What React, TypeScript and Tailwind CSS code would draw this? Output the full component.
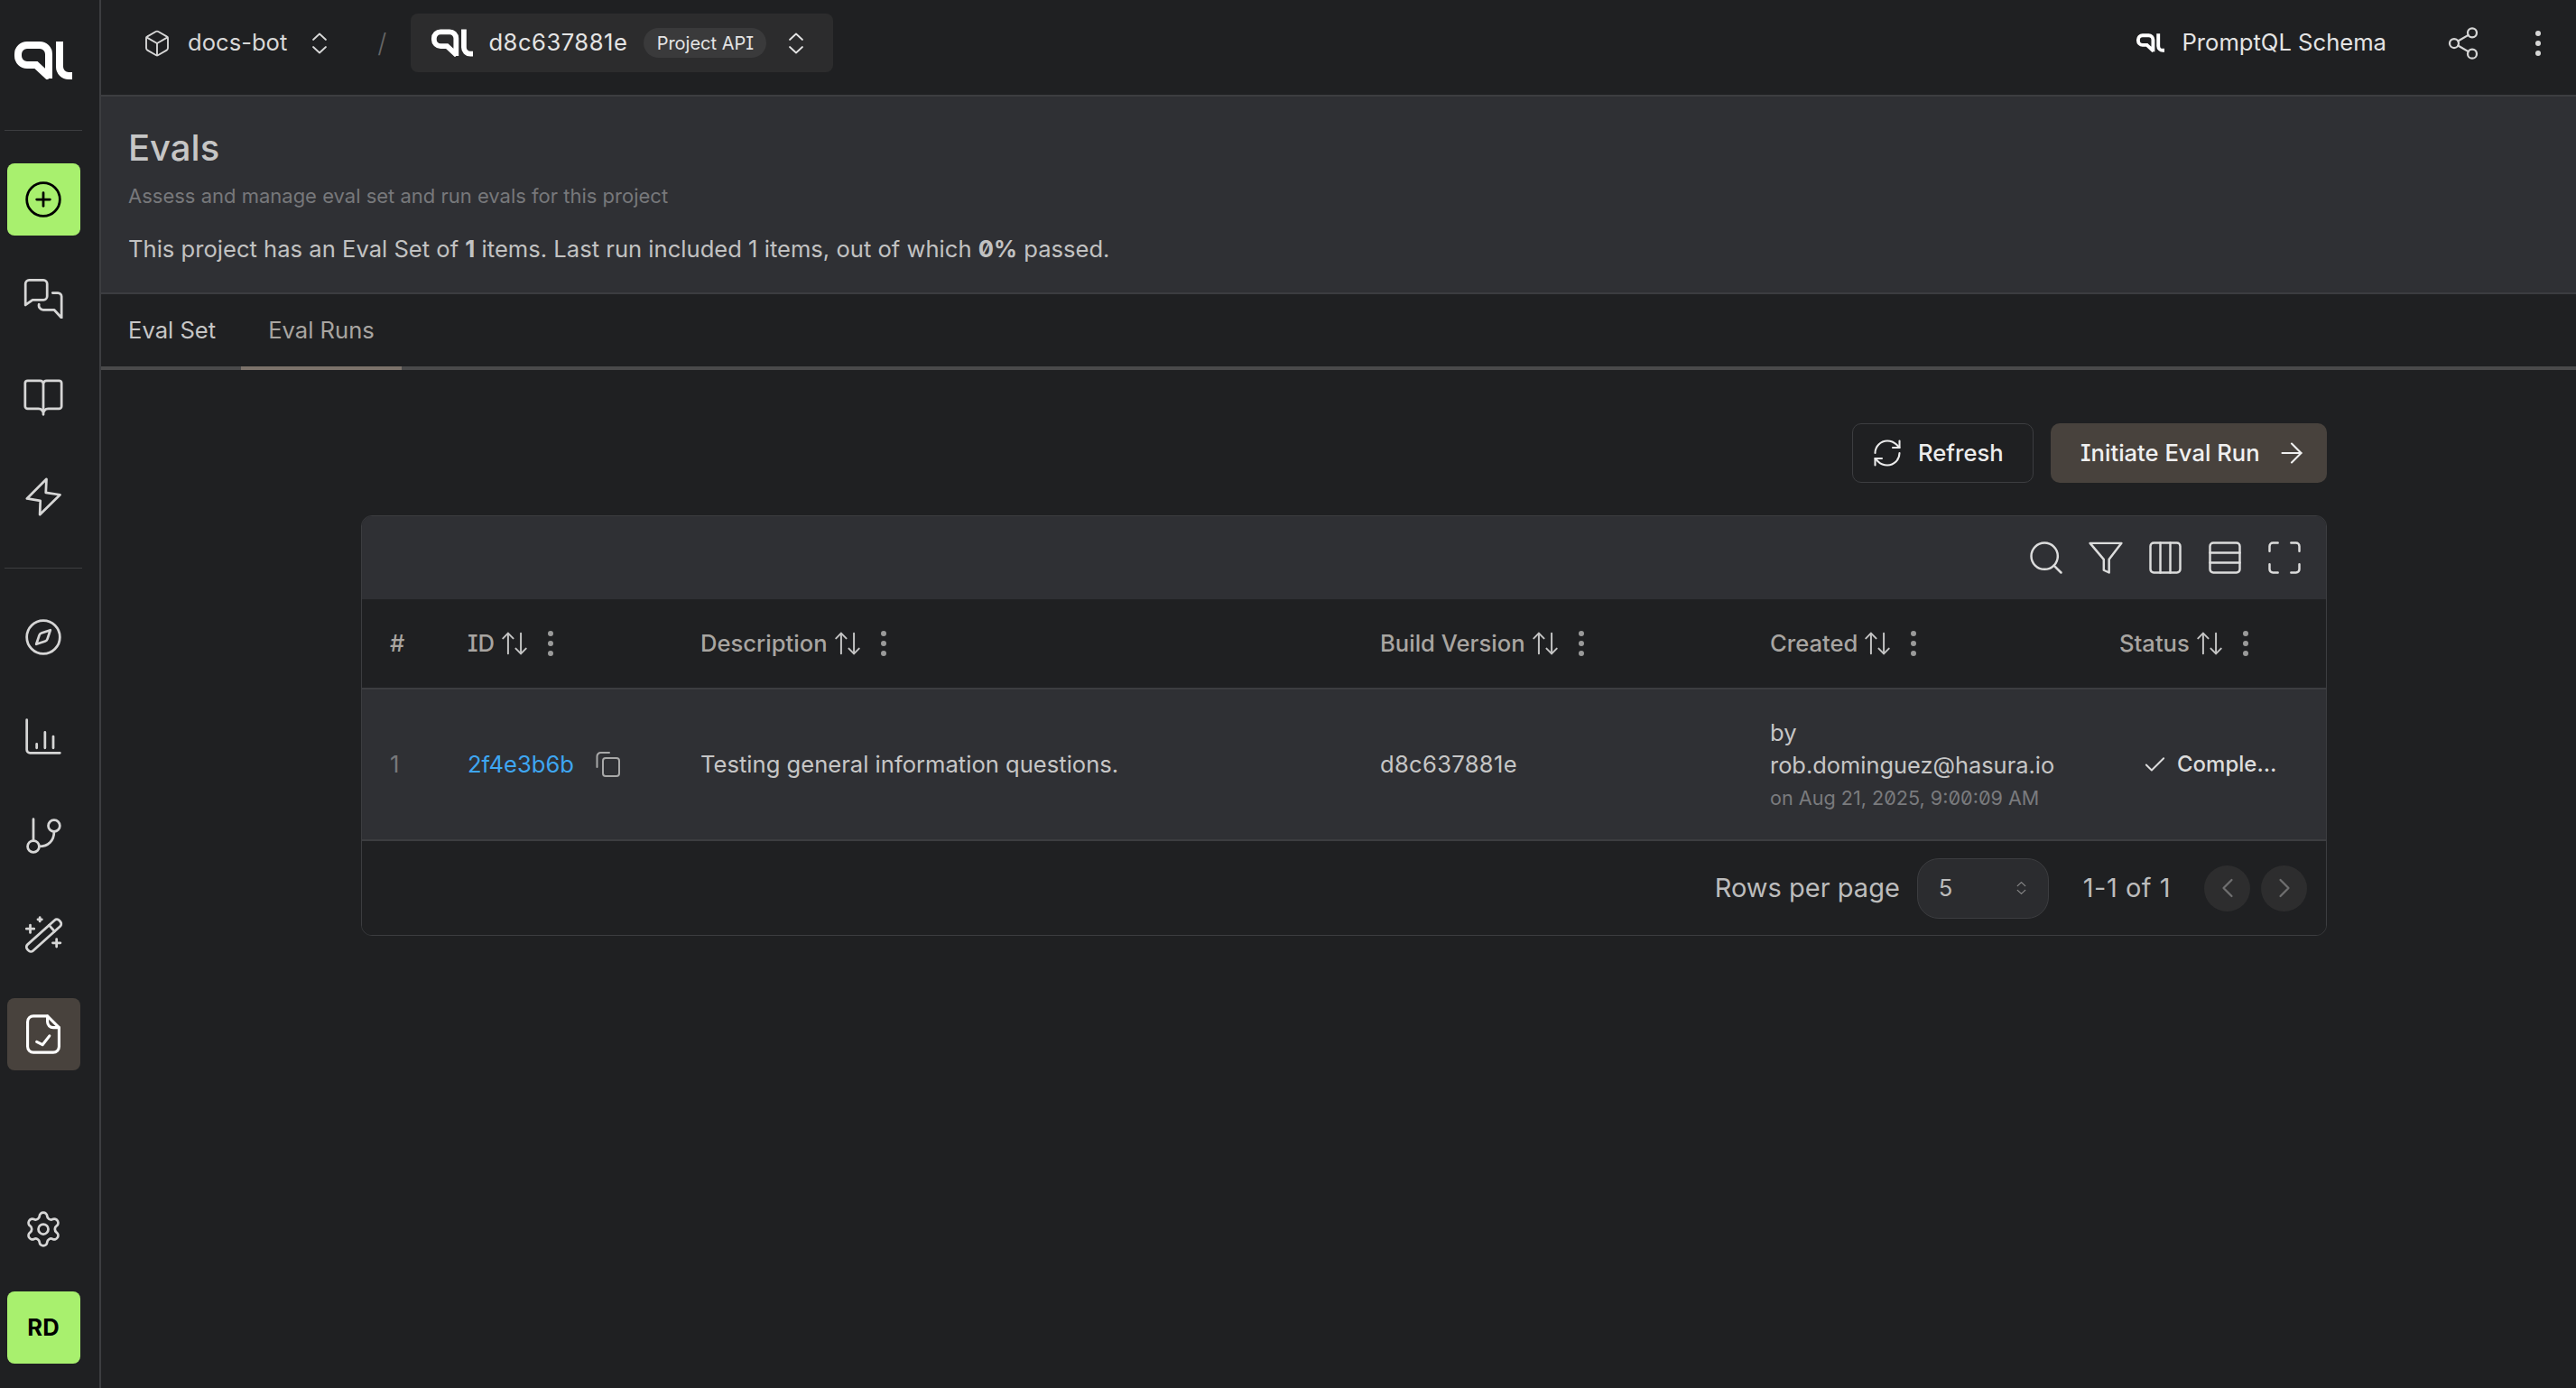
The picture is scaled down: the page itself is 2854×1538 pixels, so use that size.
import { ArrowRight, ArrowUpDown, Box, Check, ChevronLeft, ChevronRight, CirclePlus, Columns3, Compass, Maximize, RefreshCw, Rows3, Search, Settings, Share2 } from 'lucide-react'
import type { ReactNode } from 'react'

function Logo({ className }: { className: string }) {
  return (
    <svg viewBox="0 0 64 42" className={className} fill="none" stroke="currentColor" strokeWidth="8">
      <path d="M38 41V14A10 10 0 0 0 28 4H14A10 10 0 0 0 4 14v2a10 10 0 0 0 10 10h10l15 14" />
      <path d="M50 0v28a10 10 0 0 0 10 10h4" />
    </svg>
  )
}

function NavIcon({ children, strokeWidth = 1.5 }: { children: ReactNode; strokeWidth?: number }) {
  return (
    <svg viewBox="0 0 24 24" className="w-11 h-11" fill="none" stroke="currentColor" strokeWidth={strokeWidth} strokeLinecap="round" strokeLinejoin="round">
      {children}
    </svg>
  )
}

function UpDown({ className }: { className: string }) {
  return (
    <svg viewBox="0 0 18 24" className={className} fill="none" stroke="currentColor" strokeWidth="1.8" strokeLinecap="round" strokeLinejoin="round">
      <path d="M2 8l7-6.5L16 8M2 16l7 6.5 7-6.5" />
    </svg>
  )
}

function Kebab({ className }: { className: string }) {
  return (
    <svg viewBox="0 0 8 32" className={className} fill="currentColor">
      <circle cx="4" cy="5" r="3" />
      <circle cx="4" cy="16" r="3" />
      <circle cx="4" cy="27" r="3" />
    </svg>
  )
}

function SideButton({ children, tone }: { children: ReactNode; tone?: 'green' | 'active' }) {
  const toneClass = tone === 'green' ? 'bg-[#a8f06e] text-black' : tone === 'active' ? 'bg-[#48423d] text-white' : 'text-[#d6d6d6]'
  return <div className={`w-[81px] h-[80px] rounded-lg flex items-center justify-center ${toneClass}`}>{children}</div>
}

function Sidebar() {
  return (
    <aside className="w-[112px] shrink-0 h-full bg-[#1f2022] border-r-2 border-[#3c3d40] flex flex-col items-center pr-[14px] pb-[27px]">
      <div className="h-[144px] w-full flex items-start justify-center pt-[46px] text-white">
        <Logo className="w-16 h-[42px]" />
      </div>
      <div className="w-[86px] h-px bg-[#3c3d40] mb-[36px]" />
      <div className="flex flex-col gap-[30px]">
        <SideButton tone="green">
          <CirclePlus size={44} strokeWidth={1.5} />
        </SideButton>
        <SideButton>
          <NavIcon>
            <path d="M1.2 13.5V3a2.2 2.2 0 0 1 2.2-2.2h8.7A2.2 2.2 0 0 1 14.3 3v7.5a2.2 2.2 0 0 1-2.2 2.2H5.5L1.2 15.8z" />
            <path d="M17.6 8.5h3.2a2.2 2.2 0 0 1 2.2 2.2v12.9l-4.5-4.9H12a2.6 2.6 0 0 1-2.6-3.3" />
          </NavIcon>
        </SideButton>
        <SideButton>
          <NavIcon>
            <path d="M12 3.5v18M12 3.5a2 2 0 0 1 2-2h7.5a1.5 1.5 0 0 1 1.5 1.5v14a1.5 1.5 0 0 1-1.5 1.5H15a3 3 0 0 0-3 3.5 3 3 0 0 0-3-3.5H2.5A1.5 1.5 0 0 1 1 17V3a1.5 1.5 0 0 1 1.5-1.5H10a2 2 0 0 1 2 2z" />
          </NavIcon>
        </SideButton>
        <SideButton>
          <NavIcon>
            <path d="M13.9 1 2.1 12.8l8.1 1.3-.3 8.4 12.2-12-8.6-1.3z" />
          </NavIcon>
        </SideButton>
      </div>
      <div className="w-[86px] h-px bg-[#3c3d40] mt-[38px] mb-[36px]" />
      <div className="flex flex-col gap-[30px]">
        <SideButton>
          <Compass size={44} strokeWidth={1.5} />
        </SideButton>
        <SideButton>
          <NavIcon>
            <path d="M2 2v18a2 2 0 0 0 2 2h18M8 16.5V19M13 9.5V19M18 12v7" />
          </NavIcon>
        </SideButton>
        <SideButton>
          <NavIcon>
            <path d="M6 2v13M18.5 9.5c0 5.5-3.5 9-9 9" />
            <circle cx="6" cy="18.5" r="3.5" />
            <circle cx="18.5" cy="6" r="3.5" />
          </NavIcon>
        </SideButton>
        <SideButton>
          <NavIcon>
            <rect x="-13" y="-2.5" width="26" height="5" rx="2" transform="translate(12.3 12.3) rotate(-42)" />
            <path d="M6.5-2.5v5" transform="translate(12.3 12.3) rotate(-42)" />
            <path d="M4.1 6v4.6M1.8 8.3h4.6M9.9 1.4v2.4M8.7 2.6h2.4M20 14.5v4.6M17.7 16.8h4.6" />
          </NavIcon>
        </SideButton>
        <SideButton tone="active">
          <NavIcon strokeWidth={1.7}>
            <path d="M14.5 1H6a3.5 3.5 0 0 0-3.5 3.5v15A3.5 3.5 0 0 0 6 23h12a3.5 3.5 0 0 0 3.5-3.5V8z" />
            <path d="M14.5 1v3.5A3.5 3.5 0 0 0 18 8h3.5M8 16.6l3.5 1.8 4.2-5.4" />
          </NavIcon>
        </SideButton>
      </div>
      <div className="mt-auto flex flex-col gap-[29px] items-center">
        <SideButton>
          <Settings size={44} strokeWidth={1.5} />
        </SideButton>
        <SideButton tone="green">
          <span className="text-[25.6px] font-bold">RD</span>
        </SideButton>
      </div>
    </aside>
  )
}

function TopBar() {
  return (
    <header className="h-[107px] shrink-0 bg-[#1f2022] border-b-2 border-[#3c3d40] flex items-start pl-[47px] pr-[38px] pt-[15px]">
      <div className="flex items-center h-[65px] text-[#d8d8d8]">
        <Box size={32} strokeWidth={1.4} className="-mx-px" />
        <span className="ml-[19px] text-[25.6px]">docs-bot</span>
        <UpDown className="ml-[27px] w-[18px] h-6" />
        <span className="ml-[55px] mr-[27px] text-[29px] text-[#666] font-light">/</span>
      </div>
      <div className="flex items-center h-[65px] w-[468px] rounded-lg bg-[#2c2c2d] pl-[23px] text-[#e4e4e4]">
        <Logo className="w-[46px] h-[31px] text-white" />
        <span className="ml-[17px] text-[25.6px] tracking-[0.5px]">d8c637881e</span>
        <span className="ml-[18px] h-[33px] w-[136px] rounded-full bg-[#3a3a3b] flex items-center justify-center text-[20px]">Project API</span>
        <UpDown className="ml-[24px] w-[18px] h-6" />
      </div>
      <div className="ml-auto flex items-center h-[65px] text-[#e4e4e4]">
        <Logo className="w-[31px] h-[21px] text-white" />
        <span className="ml-[20px] text-[25.6px]">PromptQL Schema</span>
        <Share2 size={40} strokeWidth={1.35} className="ml-[65px] text-[#d6d6d6]" />
        <Kebab className="ml-[59px] w-2 h-8 text-[#d6d6d6]" />
      </div>
    </header>
  )
}

function HeadCell({ label }: { label: string }) {
  return (
    <div className="flex items-center text-[#a8a5a1] text-[25.6px] font-medium">
      <span>{label}</span>
      <ArrowUpDown size={34} strokeWidth={1.4} className="ml-[5px] text-[#c4c4c4]" />
      <Kebab className="ml-[19px] w-2 h-8 text-[#9a9a9a]" />
    </div>
  )
}

function EvalTable() {
  const cols = 'grid grid-cols-[86px_258px_753px_432px_387px_1fr] pl-[31px]'
  return (
    <div className="rounded-xl border border-[#3c3d40] overflow-hidden">
      {/* Toolbar */}
      <div className="h-[92px] bg-[#2f3034] flex items-center justify-end gap-[22px] pr-[24px] text-[#dcdcdc]">
        <Search size={44} strokeWidth={1.35} />
        <svg viewBox="0 0 24 24" className="w-11 h-11" fill="none" stroke="currentColor" strokeWidth="1.35" strokeLinejoin="round">
          <path d="M2.5 3.2h19L14 13v8l-3.2-1.5V13z" />
        </svg>
        <Columns3 size={44} strokeWidth={1.35} />
        <Rows3 size={44} strokeWidth={1.35} />
        <Maximize size={44} strokeWidth={1.35} />
      </div>

      {/* Column headers */}
      <div className={`${cols} h-[100px] items-center bg-[#1f2022] border-b-2 border-[#3c3d40]`}>
        <div className="text-[#a8a5a1] text-[25.6px] font-medium">#</div>
        <HeadCell label="ID" />
        <HeadCell label="Description" />
        <HeadCell label="Build Version" />
        <HeadCell label="Created" />
        <HeadCell label="Status" />
      </div>

      {/* Row */}
      <div className={`${cols} h-[168px] items-center bg-[#2f3034] border-b-2 border-[#3c3d40] text-[25.6px] text-[#c6c6c6]`}>
        <div className="text-[#77787b]">1</div>
        <div className="flex items-center">
          <span className="text-[#3ea6f2]">2f4e3b6b</span>
          <svg viewBox="0 0 27 28" className="ml-[24px] w-[27px] h-[28px] text-[#a8a8a8]" fill="none" stroke="currentColor" strokeWidth="2" strokeLinecap="round">
            <rect x="8" y="7" width="18" height="20" rx="3" />
            <path d="M1.5 17V5a4 4 0 0 1 4-4H15" />
          </svg>
        </div>
        <div>Testing general information questions.</div>
        <div className="tracking-[0.3px]">d8c637881e</div>
        <div className="leading-[36px] pt-[1px]">
          <div>by</div>
          <div className="text-[25.4px]">rob.dominguez@hasura.io</div>
          <div className="text-[21.6px] text-[#7a7b7e]">on Aug 21, 2025, 9:00:09 AM</div>
        </div>
        <div className="flex items-center pl-[25px] text-[#dcdcdc] font-medium">
          <Check size={29} strokeWidth={1.6} />
          <span className="ml-[10px] text-[24px]">Comple…</span>
        </div>
      </div>

      {/* Pagination */}
      <div className="h-[104px] bg-[#1f2022] flex items-center justify-end pr-[21px] text-[#bcbcbc] text-[29px]">
        <span>Rows per page</span>
        <div className="ml-[19px] w-[146px] h-[67px] rounded-[24px] bg-[#2b2c2f] border border-[#3c3d40] flex items-center justify-between pl-[23px] pr-[24px] text-[25.6px]">
          5
          <UpDown className="w-[11px] h-[20px] text-[#8d8d8d]" />
        </div>
        <span className="ml-[38px] tracking-[0.5px]">1-1 of 1</span>
        <div className="ml-[37px] w-[51px] h-[51px] rounded-full bg-[#2d2d2e] flex items-center justify-center text-[#6f6f70]">
          <ChevronLeft size={36} strokeWidth={1.5} />
        </div>
        <div className="ml-[12px] w-[51px] h-[51px] rounded-full bg-[#2d2d2e] flex items-center justify-center text-[#6f6f70]">
          <ChevronRight size={36} strokeWidth={1.5} />
        </div>
      </div>
    </div>
  )
}

export default function App() {
  return (
    <div className="w-screen h-screen flex overflow-hidden bg-[#1f2022] font-['Inter',sans-serif] [font-feature-settings:'cv08','zero']">
      <Sidebar />
      <main className="flex-1 min-w-0 flex flex-col">
        <TopBar />

        {/* Page header */}
        <section className="h-[219px] shrink-0 bg-[#2f3034] border-b-2 border-[#3c3d40] pl-[30px] pt-[33px]">
          <h1 className="text-[40px] leading-[48px] font-medium text-[#c6c6c6]">Evals</h1>
          <p className="mt-[13px] text-[22px] leading-[32px] text-[#77787b]">Assess and manage eval set and run evals for this project</p>
          <p className="mt-[25px] text-[25.6px] leading-[36px] text-[#c2c2c2]">
            This project has an Eval Set of <b className="font-bold">1</b> items. Last run included 1 items, out of which <b className="font-bold">0%</b> passed.
          </p>
        </section>

        {/* Tabs */}
        <nav className="h-[84px] shrink-0 flex border-b-4 border-[#4a4a4b] -mb-px">
          <div className="pl-[30px] pr-[28px] flex items-center text-[25.6px] text-[#c6c6c6]">Eval Set</div>
          <div className="px-[30px] flex items-center text-[25.6px] text-[#a8a5a1] border-b-4 border-[#7c736b] -mb-[4px]">Eval Runs</div>
        </nav>

        <section className="pl-[288px] pr-[276px] pt-[60px]">
          <div className="flex justify-end gap-[19px] mb-[36px]">
            <button className="w-[201px] h-[66px] rounded-[10px] border border-[#3c3d40] flex items-center pl-[20px] text-[25.6px] font-medium text-[#ececec]">
              <RefreshCw size={36} strokeWidth={1.4} />
              <span className="ml-[16px]">Refresh</span>
            </button>
            <button className="w-[306px] h-[66px] rounded-[10px] bg-[#48423d] flex items-center pl-[33px] text-[25.6px] font-medium text-[#f0f0f0]">
              Initiate Eval Run
              <ArrowRight size={36} strokeWidth={1.4} className="ml-[17px]" />
            </button>
          </div>
          <EvalTable />
        </section>
      </main>
    </div>
  )
}
